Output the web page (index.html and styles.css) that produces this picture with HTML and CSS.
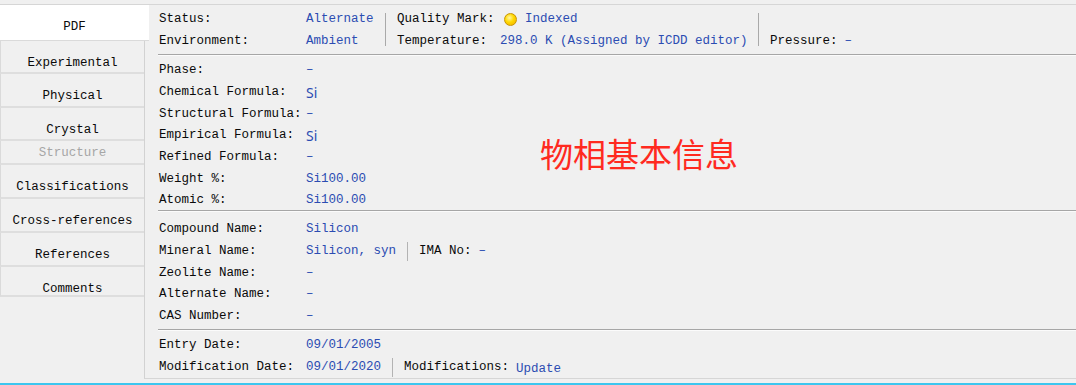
FILE: index.html
```html
<!DOCTYPE html>
<html lang="en">
<head>
<meta charset="utf-8">
<title>PDF Card</title>
<link rel="stylesheet" href="styles.css">
</head>
<body>
<div class="window">
  <nav class="tabs">
    <div class="tab active">PDF</div>
    <div class="tab t33">Experimental</div>
    <div class="tab">Physical</div>
    <div class="tab t33">Crystal</div>
    <div class="tab disabled">Structure</div>
    <div class="tab">Classifications</div>
    <div class="tab">Cross-references</div>
    <div class="tab">References</div>
    <div class="tab short">Comments</div>
  </nav>
  <main class="panel">
    <section class="sec sec-status">
      <div class="col col-a">
        <div class="row"><span class="lbl">Status:</span><span class="val">Alternate</span></div>
        <div class="row"><span class="lbl">Environment:</span><span class="val">Ambient</span></div>
      </div>
      <div class="vsep"></div>
      <div class="col col-b">
        <div class="row"><span class="lbl lbl-b">Quality Mark:</span><span class="dot"></span><span class="val">Indexed</span></div>
        <div class="row"><span class="lbl lbl-b">Temperature:</span><span class="val">298.0 K (Assigned by ICDD editor)</span></div>
      </div>
      <div class="vsep"></div>
      <div class="col col-c">
        <div class="row"></div>
        <div class="row"><span class="lbl-inline">Pressure:</span><span class="val">–</span></div>
      </div>
    </section>
    <div class="hr"></div>
    <section class="sec sec-formula">
      <div class="row"><span class="lbl">Phase:</span><span class="val">–</span></div>
      <div class="row"><span class="lbl">Chemical Formula:</span><span class="val sans">Si</span></div>
      <div class="row"><span class="lbl">Structural Formula:</span><span class="val">–</span></div>
      <div class="row"><span class="lbl">Empirical Formula:</span><span class="val sans">Si</span></div>
      <div class="row"><span class="lbl">Refined Formula:</span><span class="val">–</span></div>
      <div class="row"><span class="lbl">Weight %:</span><span class="val">Si100.00</span></div>
      <div class="row"><span class="lbl">Atomic %:</span><span class="val">Si100.00</span></div>
      <div class="note">物相基本信息</div>
    </section>
    <div class="hr"></div>
    <section class="sec sec-names">
      <div class="row"><span class="lbl">Compound Name:</span><span class="val">Silicon</span></div>
      <div class="row"><span class="lbl">Mineral Name:</span><span class="val">Silicon, syn</span><span class="isep"></span><span class="lbl-inline">IMA No:</span><span class="val">–</span></div>
      <div class="row"><span class="lbl">Zeolite Name:</span><span class="val">–</span></div>
      <div class="row"><span class="lbl">Alternate Name:</span><span class="val">–</span></div>
      <div class="row"><span class="lbl">CAS Number:</span><span class="val">–</span></div>
    </section>
    <div class="hr"></div>
    <section class="sec sec-dates">
      <div class="row"><span class="lbl">Entry Date:</span><span class="val">09/01/2005</span></div>
      <div class="row"><span class="lbl">Modification Date:</span><span class="val">09/01/2020</span><span class="isep"></span><span class="lbl-inline">Modifications:</span><span class="val low">Update</span></div>
    </section>
  </main>
</div>
<div class="gap"></div>
<div class="accent"></div>
</body>
</html>
```
FILE: styles.css
```css
html, body {
  margin: 0;
  padding: 0;
}
body {
  background: #f0f0f0;
  font-family: "Liberation Mono", "DejaVu Sans Mono", monospace;
  font-size: 12.5px;
  color: #0a0a0a;
  height: 385px;
  overflow: hidden;
}
.window {
  margin-top: 4px;
  border-top: 1px solid #d6d6d6;
  display: flex;
  height: 374px;
}
.tabs {
  width: 144px;
  flex: none;
  display: flex;
  flex-direction: column;
  position: relative;
  z-index: 1;
}
.tab {
  box-sizing: border-box;
  height: 34px;
  padding-top: 13px;
  line-height: 18px;
  text-align: center;
  white-space: nowrap;
  border-left: 1px solid #dadada;
  border-bottom: 2px solid #dedede;
  background: #f0f0f0;
  color: #0a0a0a;
}
.tab.t33 { height: 33px; }
.tab.active {
  height: 36px;
  width: 149px;
  padding-top: 13px;
  background: #ffffff;
  border-left: 0;
  border-bottom: 1px solid #dadada;
}
.tab.disabled {
  height: 24px;
  padding-top: 3px;
  color: #a6a6a6;
}
.tab.short { height: 30px; }

.panel {
  flex: 1;
  border-left: 1px solid #d2d2d2;
  border-bottom: 1px solid #d6d6d6;
  display: flex;
  flex-direction: column;
}
.sec {
  padding-left: 14px;
  box-sizing: border-box;
}
.row {
  display: flex;
  align-items: center;
  height: 21.7px;
  white-space: nowrap;
}
.lbl {
  min-width: 147px;
  flex: none;
}
.lbl-inline {
  margin-right: 7px;
}
.val {
  color: #2b4cb2;
}
.val.sans {
  font-family: "Noto Sans", "Liberation Sans", sans-serif;
  font-size: 14px;
}
.val.low {
  position: relative;
  top: 2px;
}

.sec-status {
  height: 49px;
  padding-top: 3.5px;
  display: flex;
}
.col-a { width: 226px; flex: none; }
.col-b { width: 361px; flex: none; }
.lbl-b { min-width: 103px; }
.vsep {
  width: 1px;
  height: 33px;
  margin: 4.5px 11px 0 0;
  background: #a9a9a9;
  flex: none;
}
.dot {
  width: 11px;
  height: 11px;
  border-radius: 50%;
  margin: 0 8px 0 4px;
  border: 1px solid #c89400;
  background: radial-gradient(circle at 40% 35%, #fff7a8 0%, #ffd800 45%, #f0ac00 100%);
  flex: none;
}

.hr {
  margin-left: 13px;
  height: 0;
  border-top: 1px solid #a6a6a6;
  border-bottom: 1px solid #fbfbfb;
}
.sec-formula {
  height: 154px;
  padding-top: 3.5px;
  position: relative;
}
.note {
  position: absolute;
  left: 395px;
  top: 81px;
  font-family: "Noto Sans CJK SC", "Noto Sans CJK JP", sans-serif;
  font-size: 33px;
  line-height: 1;
  color: #ff2a1f;
}
.sec-names {
  height: 117px;
  padding-top: 6.5px;
}
.sec-dates {
  flex: 1;
  padding-top: 3.5px;
}
.isep {
  display: inline-block;
  width: 1px;
  height: 19px;
  background: #b3b3b3;
  margin: 0 11px;
  flex: none;
}
.gap {
  height: 4px;
}
.accent {
  height: 2px;
  background: #3cc6ef;
}
```
